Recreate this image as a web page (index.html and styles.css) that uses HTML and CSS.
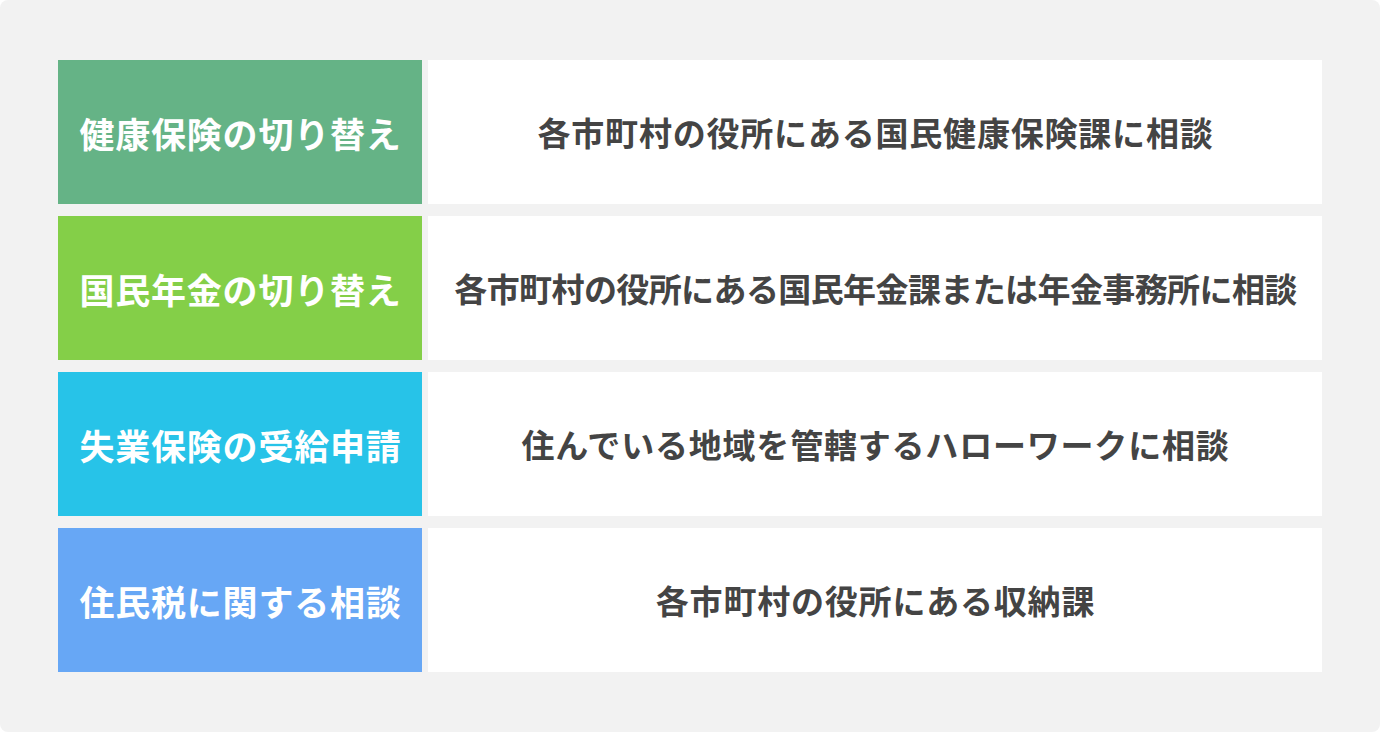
FILE: index.html
```html
<!DOCTYPE html>
<html lang="ja">
<head>
<meta charset="utf-8">
<link rel="stylesheet" href="styles.css">
</head>
<body>
<div class="board">
  <div class="row">
    <div class="label green">健康保険の切り替え</div>
    <div class="desc">各市町村の役所にある国民健康保険課に相談</div>
  </div>
  <div class="row">
    <div class="label lime">国民年金の切り替え</div>
    <div class="desc tight">各市町村の役所にある国民年金課または年金事務所に相談</div>
  </div>
  <div class="row">
    <div class="label cyan">失業保険の受給申請</div>
    <div class="desc">住んでいる地域を管轄するハローワークに相談</div>
  </div>
  <div class="row">
    <div class="label blue">住民税に関する相談</div>
    <div class="desc">各市町村の役所にある収納課</div>
  </div>
</div>
</body>
</html>
```
FILE: styles.css
```css
html, body {
  margin: 0;
  padding: 0;
  background: #ffffff;
}
.board {
  width: 1380px;
  height: 732px;
  box-sizing: border-box;
  background: #f2f2f2;
  border-radius: 8px;
  padding: 60px 58px;
  display: flex;
  flex-direction: column;
  gap: 12px;
  font-family: "Noto Sans CJK JP", "Noto Sans", sans-serif;
  font-weight: 700;
}
.row {
  display: grid;
  grid-template-columns: 364px 1fr;
  gap: 6px;
  height: 144px;
}
.label {
  display: flex;
  align-items: center;
  justify-content: center;
  color: #ffffff;
  font-size: 35px;
  letter-spacing: 0.8px;
  padding-left: 1px;
}
.green { background: #65b386; }
.lime { background: #84cf48; }
.cyan { background: #27c3e8; }
.blue { background: #67a7f5; }
.desc {
  background: #ffffff;
  display: flex;
  align-items: center;
  justify-content: center;
  color: #444444;
  font-size: 33px;
  letter-spacing: 0.8px;
  padding-left: 1px;
}
.desc.tight {
  letter-spacing: -0.6px;
}
```
